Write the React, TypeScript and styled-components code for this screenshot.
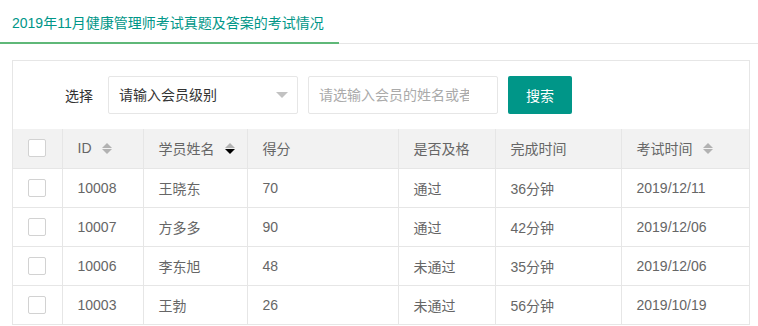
import React from "react";
import styled, { createGlobalStyle } from "styled-components";

const GlobalStyle = createGlobalStyle`
  html, body { margin: 0; padding: 0; background: #fff; }
  body {
    font-family: "Liberation Sans", Arial, "Noto Sans CJK SC", sans-serif;
    font-size: 14px;
    color: #666;
  }
  * { box-sizing: border-box; }
`;

const Page = styled.div`
  width: 758px;
  height: 326px;
  overflow: hidden;
`;

const TabBar = styled.div`
  display: flex;
  align-items: flex-start;
  height: 44px;
  border-bottom: 1px solid #e6e6e6;
`;

const Tab = styled.div<{ $active?: boolean }>`
  width: 339px;
  height: 44px;
  padding: 4px 0 0 12px;
  line-height: 38px;
  font-size: 14px;
  color: ${(p) => (p.$active ? "#009688" : "#666")};
  border-bottom: 2px solid ${(p) => (p.$active ? "#5FB878" : "transparent")};
  white-space: nowrap;
`;

const Panel = styled.div`
  margin: 16px 8px 0 12px;
  border: 1px solid #e6e6e6;
  border-bottom: none;
`;

const FormRow = styled.div`
  display: flex;
  align-items: center;
  padding: 15px 0;
`;

const Label = styled.label`
  width: 95px;
  padding-right: 15px;
  text-align: right;
  color: #333;
  font-size: 14px;
`;

const SelectBox = styled.div`
  position: relative;
  width: 190px;
  height: 38px;
  border: 1px solid #e6e6e6;
  border-radius: 2px;
  padding-left: 10px;
  line-height: 36px;
  color: #333;
  background: #fff;
`;

const Caret = styled.span`
  position: absolute;
  right: 9px;
  top: 15px;
  width: 0;
  height: 0;
  border-left: 6px solid transparent;
  border-right: 6px solid transparent;
  border-top: 6px solid #c2c2c2;
`;

const TextInput = styled.input`
  margin-left: 10px;
  width: 190px;
  height: 38px;
  border: 1px solid #e6e6e6;
  border-radius: 2px;
  padding: 0 28px 0 10px;
  font-family: inherit;
  font-size: 14px;
  color: #333;
  outline: none;
  &::placeholder { color: #aaa; }
`;

const Button = styled.button`
  margin-left: 10px;
  width: 64px;
  height: 38px;
  border: none;
  border-radius: 2px;
  background: #009688;
  color: #fff;
  font-family: inherit;
  font-size: 14px;
  padding: 0;
`;

const Table = styled.table`
  width: 736px;
  border-collapse: collapse;
  table-layout: fixed;
`;

const HeadRow = styled.tr`
  background: #f2f2f2;
`;

const Cell = styled.td<{ $center?: boolean }>`
  height: 39px;
  padding: 0 15px;
  border-bottom: 1px solid #e6e6e6;
  border-right: 1px solid #e6e6e6;
  color: #666;
  font-size: 14px;
  font-weight: normal;
  text-align: ${(p) => (p.$center ? "center" : "left")};
  white-space: nowrap;
  vertical-align: middle;
  &:last-child { border-right: none; }
`;

const HeadCell = styled(Cell).attrs({ as: "th" })``;

const HeadInner = styled.span`
  display: inline-flex;
  align-items: center;
`;

const SortIcon = styled.span<{ $desc?: boolean }>`
  display: inline-flex;
  flex-direction: column;
  align-items: center;
  margin-left: 10px;
  gap: 1px;
  &::before, &::after {
    content: "";
    width: 0;
    height: 0;
    border-left: 5px solid transparent;
    border-right: 5px solid transparent;
  }
  &::before { border-bottom: 5px solid #b2b2b2; }
  &::after { border-top: 5px solid ${(p) => (p.$desc ? "#000" : "#b2b2b2")}; }
`;

const Checkbox = styled.span`
  display: inline-block;
  width: 18px;
  height: 18px;
  border: 1px solid #d2d2d2;
  border-radius: 2px;
  background: #fff;
  vertical-align: middle;
`;

const rows = [
  ["10008", "王晓东", "70", "通过", "36分钟", "2019/12/11"],
  ["10007", "方多多", "90", "通过", "42分钟", "2019/12/06"],
  ["10006", "李东旭", "48", "未通过", "35分钟", "2019/12/06"],
  ["10003", "王勃", "26", "未通过", "56分钟", "2019/10/19"],
];

const widths = [49, 81, 104, 151, 97, 126, 128];

export default function App() {
  return (
    <Page>
      <GlobalStyle />
      <TabBar>
        <Tab $active>2019年11月健康管理师考试真题及答案的考试情况</Tab>
      </TabBar>
      <Panel>
        <FormRow>
          <Label>选择</Label>
          <SelectBox>
            请输入会员级别
            <Caret />
          </SelectBox>
          <TextInput placeholder="请选输入会员的姓名或者学号" />
          <Button>搜索</Button>
        </FormRow>
        <Table>
          <colgroup>
            {widths.map((w, i) => (
              <col key={i} style={{ width: w }} />
            ))}
          </colgroup>
          <thead>
            <HeadRow>
              <HeadCell $center style={{ padding: 0 }}>
                <Checkbox />
              </HeadCell>
              <HeadCell>
                <HeadInner>
                  ID
                  <SortIcon />
                </HeadInner>
              </HeadCell>
              <HeadCell>
                <HeadInner>
                  学员姓名
                  <SortIcon $desc />
                </HeadInner>
              </HeadCell>
              <HeadCell>得分</HeadCell>
              <HeadCell>是否及格</HeadCell>
              <HeadCell>完成时间</HeadCell>
              <HeadCell>
                <HeadInner>
                  考试时间
                  <SortIcon />
                </HeadInner>
              </HeadCell>
            </HeadRow>
          </thead>
          <tbody>
            {rows.map((r) => (
              <tr key={r[0]}>
                <Cell $center style={{ padding: 0 }}>
                  <Checkbox />
                </Cell>
                {r.map((v, i) => (
                  <Cell key={i}>{v}</Cell>
                ))}
              </tr>
            ))}
          </tbody>
        </Table>
      </Panel>
    </Page>
  );
}
